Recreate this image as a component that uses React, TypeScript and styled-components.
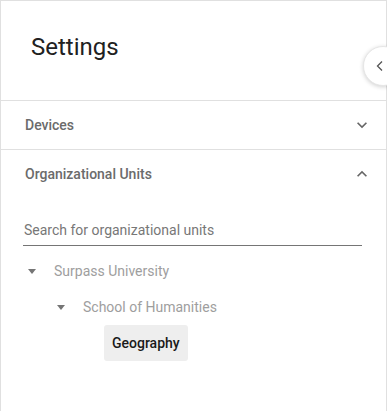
import styled, { createGlobalStyle } from 'styled-components'

const GlobalStyle = createGlobalStyle`
   html, body {
      margin: 0;
      padding: 0;
      overflow: hidden;
      background: #fff;
   }
   body {
      font-family: Roboto, 'Liberation Sans', Arial, sans-serif;
   }
`

const Panel = styled.aside`
   position: relative;
   box-sizing: border-box;
   width: 387px;
   height: 411px;
   border: 1px solid #e0e0e0;
   border-bottom: none;
   background: #fff;
`

const Header = styled.header`
   box-sizing: border-box;
   height: 100px;
   padding: 32px 0 0 30px;
   border-bottom: 1px solid #e0e0e0;
`

const Title = styled.h1`
   margin: 0;
   font-size: 24px;
   font-weight: 400;
   color: #212121;
`

const CollapseButton = styled.button`
   position: absolute;
   left: 362px;
   top: 45px;
   width: 40px;
   height: 40px;
   padding: 0 0 0 10px;
   border: 1px solid #e6e6e6;
   border-radius: 50%;
   background: #fff;
   box-shadow: 0 1px 4px rgba(0, 0, 0, 0.18);
   display: flex;
   align-items: center;
   color: #555;
`

const Section = styled.section<{ $open?: boolean }>`
   border-bottom: ${({ $open }) => ($open ? 'none' : '1px solid #e0e0e0')};
`

const SectionHead = styled.div`
   height: 48px;
   display: flex;
   align-items: center;
   justify-content: space-between;
   padding: 0 14px 0 24px;
   font-size: 14px;
   font-weight: 500;
   color: #6b6b6b;
`

const SectionBody = styled.div`
   padding: 17px 24px 0 22px;
`

const SearchField = styled.input`
   box-sizing: border-box;
   width: 100%;
   height: 31px;
   padding: 0 0 1px 1px;
   border: none;
   border-bottom: 1px solid #757575;
   outline: none;
   font-family: inherit;
   font-size: 14px;
   color: #333;
   background: transparent;

   &::placeholder {
      color: #777;
   }
`

const Tree = styled.ul`
   list-style: none;
   margin: 7px 0 0;
   padding: 0;
`

const TreeRow = styled.li<{ $level: number }>`
   height: 36px;
   display: flex;
   align-items: center;
   padding-left: ${({ $level }) => 5 + $level * 29}px;
   font-size: 14px;
   color: #9e9e9e;
`

const Caret = styled.span<{ $hidden?: boolean }>`
   width: 0;
   height: 0;
   margin-right: 18px;
   border-left: 4px solid transparent;
   border-right: 4px solid transparent;
   border-top: 5px solid ${({ $hidden }) => ($hidden ? 'transparent' : '#757575')};
`

const Selected = styled.span`
   margin-left: -8px;
   padding: 0 8px;
   height: 36px;
   line-height: 36px;
   border-radius: 3px;
   background: #eeeeee;
   font-weight: 500;
   color: #1a1a1a;
`

const Chevron = ({ up }: { up?: boolean }) => (
   <svg width='20' height='20' viewBox='0 0 24 24' fill='#666'>
      <path
         d={up ? 'M12 8l-6 6 1.41 1.41L12 10.83l4.59 4.58L18 14z' : 'M16.59 8.59L12 13.17 7.41 8.59 6 10l6 6 6-6z'}
      />
   </svg>
)

export default function App() {
   return (
      <>
         <GlobalStyle />
         <Panel>
            <Header>
               <Title>Settings</Title>
            </Header>
            <CollapseButton aria-label='Collapse'>
               <svg width='12' height='12' viewBox='0 0 12 12' fill='none' stroke='#555' strokeWidth='1.3'>
                  <path d='M8 1.5L3.5 6 8 10.5' />
               </svg>
            </CollapseButton>

            <Section>
               <SectionHead>
                  Devices
                  <Chevron />
               </SectionHead>
            </Section>

            <Section $open>
               <SectionHead>
                  Organizational Units
                  <Chevron up />
               </SectionHead>
               <SectionBody>
                  <SearchField placeholder='Search for organizational units' />
                  <Tree>
                     <TreeRow $level={0}>
                        <Caret />
                        Surpass University
                     </TreeRow>
                     <TreeRow $level={1}>
                        <Caret />
                        School of Humanities
                     </TreeRow>
                     <TreeRow $level={2}>
                        <Caret $hidden />
                        <Selected>Geography</Selected>
                     </TreeRow>
                  </Tree>
               </SectionBody>
            </Section>
         </Panel>
      </>
   )
}
